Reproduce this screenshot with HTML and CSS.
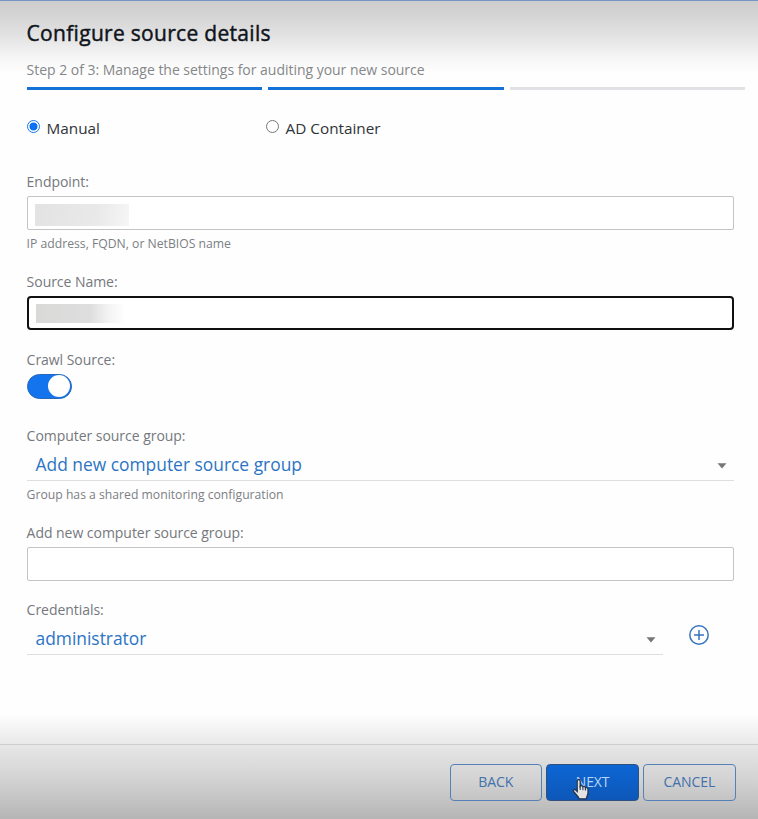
FILE: index.html
```html
<!DOCTYPE html>
<html lang="en">
<head>
<meta charset="utf-8">
<title>Configure source details</title>
<link rel="stylesheet" href="styles.css">
</head>
<body>
<main class="dialog">
  <header class="header">
    <h1 class="title"><span>Configure source details</span></h1>
    <p class="subtitle"><span>Step 2 of 3: Manage the settings for auditing your new source</span></p>
    <div class="steps"><i class="step done"></i><i class="step done"></i><i class="step"></i></div>
  </header>
  <form class="form">
    <div class="modes">
      <label class="mode"><i class="radio checked"></i><span>Manual</span></label>
      <label class="mode"><i class="radio"></i><span>AD Container</span></label>
    </div>
    <section class="field endpoint">
      <label class="label"><span>Endpoint:</span></label>
      <div class="input"><i class="redacted"></i></div>
      <p class="hint"><span>IP address, FQDN, or NetBIOS name</span></p>
    </section>
    <section class="field source">
      <label class="label"><span>Source Name:</span></label>
      <div class="input focused"><i class="redacted short"></i></div>
    </section>
    <section class="field crawl">
      <label class="label"><span>Crawl Source:</span></label>
      <div class="toggle"><i class="knob"></i></div>
    </section>
    <section class="field group">
      <label class="label"><span>Computer source group:</span></label>
      <div class="select"><span class="value">Add new computer source group</span><svg class="caret" viewBox="0 0 10 6"><path d="M.5 .3h9L5 5.6z"/></svg></div>
      <p class="hint"><span>Group has a shared monitoring configuration</span></p>
    </section>
    <section class="field newgroup">
      <label class="label"><span>Add new computer source group:</span></label>
      <div class="input"></div>
    </section>
    <section class="field credentials">
      <label class="label"><span>Credentials:</span></label>
      <div class="row">
        <div class="select"><span class="value">administrator</span><svg class="caret" viewBox="0 0 10 6"><path d="M.5 .3h9L5 5.6z"/></svg></div>
        <svg class="add" viewBox="0 0 22 22"><circle cx="11" cy="11" r="9.2"/><path d="M11 6v10M6 11h10"/></svg>
      </div>
    </section>
  </form>
  <footer class="footer">
    <button class="button" type="button"><span>BACK</span></button>
    <button class="button primary" type="button"><span>NEXT</span>
      <svg class="pointer" viewBox="0 0 18 22"><path d="M5.2 13.4V3.2C5.2.9 8.2.9 8.2 3.2V8.2C8.8 7.2 10.6 7.4 10.9 8.7 11.8 8 13.2 8.4 13.4 9.7 14.6 9.1 16 9.8 16 11.3V14.5C16 17 14.7 18.2 14.4 20.8H7C6.6 18.5 3.7 16.3 1.7 13.6.8 12.1 2.2 11 3.5 11.8z"/><path class="creases" d="M8.2 8v4M10.9 9v3.2M13.4 10v2.6"/></svg>
    </button>
    <button class="button" type="button"><span>CANCEL</span></button>
  </footer>
</main>
</body>
</html>
```
FILE: styles.css
```css
* { box-sizing: border-box; }
body { margin: 0; font-family: "Open Sans", sans-serif; background: #fff; }
h1, p { margin: 0; font-weight: 400; }
i { display: block; }
.dialog {
  width: 758px; height: 819px; overflow: hidden;
  display: flex; flex-direction: column;
  border-top: 1px solid #7596c4;
  background:
    linear-gradient(#cdcdcd, #d4d4d4 14px, #e2e2e2 34px, #f5f5f5 56px, #fefefe 72px, transparent 76px),
    #fefefe;
}
.header { padding: 20px 13px 0 26.6px; height: 89px; }
.title { height: 24px; line-height: 24px; font-size: 21px; letter-spacing: .3px; -webkit-text-stroke: .45px #10151b; color: #10151b; white-space: nowrap; }
.subtitle { height: 20px; line-height: 20px; margin-top: 15px; font-size: 14px; letter-spacing: -.025px; color: #858789; }
.steps { display: grid; grid-template-columns: repeat(3, 1fr); gap: 6px; margin-top: 7px; }
.step { height: 3px; background: #e1e1e6; }
.step.done { background: #1471d8; }
.form { padding: 0 24px 0 27px; height: 654px; background: linear-gradient(transparent 624px, #e9e9e9 654px); }
.modes { display: grid; grid-template-columns: 239px 1fr; padding-top: 28px; height: 82px; }
.mode { display: flex; gap: 6.6px; height: 20px; line-height: 20px; font-size: 15.3px; color: #303338; }
.radio { width: 13px; height: 13px; margin-top: 2px; border: 1px solid #777; border-radius: 50%; background: #fff; }
.radio.checked { border-color: #1677e8; background: radial-gradient(circle, #0872f5 3.6px, #fff 4.4px); }
.label { display: block; height: 20px; line-height: 20px; margin-left: -.4px; font-size: 14px; letter-spacing: -.04px; color: #75787d; }
.input { height: 34px; margin-top: 4px; border: 1px solid #c4c4c6; border-radius: 2px; padding: 7px; background: #fff; }
.focused { border: 2px solid #101012; border-radius: 4px; padding: 6px 7px; }
.redacted { width: 94px; height: 22px; background: linear-gradient(100deg, #e3e3e3, #e9e9e9 65%, #f6f6f6); }
.short { width: 90px; height: 19px; background: linear-gradient(90deg, #d9d9d8, #dedede 60%, #f3f3f3 80%, #fff); }
.hint { height: 18px; line-height: 18px; margin-left: -.4px; font-size: 12.2px; color: #7c7f84; }
.endpoint { height: 100px; }
.endpoint .hint { margin-top: 5px; }
.source { height: 78px; }
.crawl { height: 76px; }
.group { height: 97px; }
.newgroup { height: 77px; }
.toggle { width: 45px; height: 25px; margin-top: 4px; border: 1px solid #2668bb; border-radius: 13px; background: #1474ed; display: flex; justify-content: flex-end; padding-right: 1px; }
.knob { width: 22px; height: 22px; border-radius: 50%; background: #fff; }
.select { height: 35px; border-bottom: 1px solid #dedee0; display: flex; justify-content: space-between; padding: 6px 7px 0 8.5px; }
.value { font-size: 17.4px; line-height: 24px; height: 24px; color: #2c74c4; }
.caret { width: 10px; height: 6px; margin-top: 11px; fill: #777; }
.group .hint { margin-top: 5px; }
.row { display: flex; }
.row .select { width: 636px; }
.add { width: 22px; height: 22px; margin: 4px 0 0 25px; fill: none; stroke: #3674bf; stroke-width: 1.5; }
.footer { flex: 1; border-top: 1px solid #cecece; padding: 19px 22.4px 0 0; display: flex; justify-content: flex-end; gap: 4.3px; background: linear-gradient(#e7e7e7, #d1d1d1 50%, #b5b5b5); }
.button { position: relative; width: 92.5px; height: 37px; padding: 0 0 1px; border: 1px solid #5681b7; border-radius: 4px; background: transparent; font: 14px/20px "Open Sans", sans-serif; letter-spacing: -.1px; color: #4270ac; }
.primary { background: linear-gradient(#0d66d4, #0d57b8); border-color: #31527f; color: #b7d8f5; }
.pointer { position: absolute; left: 24.5px; top: 13px; width: 18px; height: 22px; fill: #e4e4e4; stroke: #25354c; stroke-width: 1.3; }
.creases { fill: none; stroke-width: 1; }
```
